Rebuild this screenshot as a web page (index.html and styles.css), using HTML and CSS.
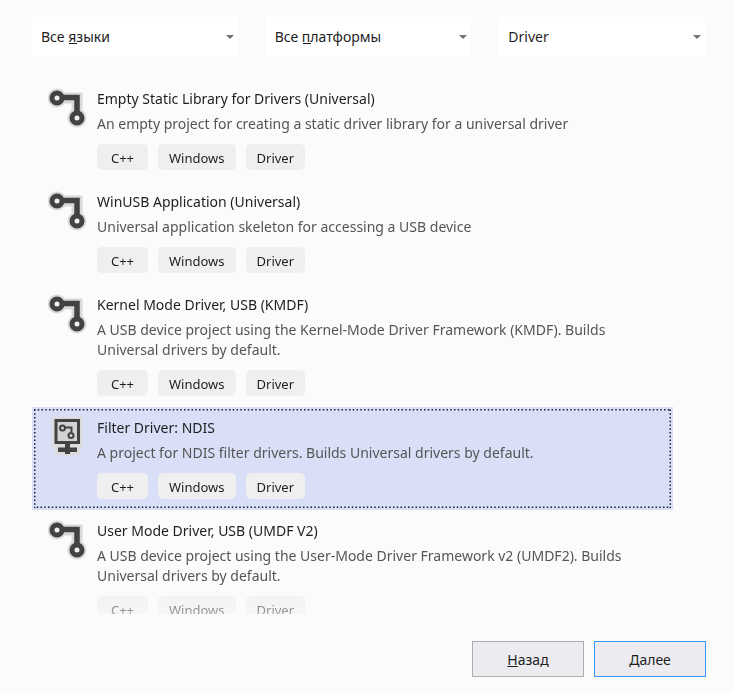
FILE: index.html
```html
<!DOCTYPE html>
<html lang="ru">
<head>
	<meta charset="UTF-8">
	<title>Создание проекта</title>
	<link rel="stylesheet" href="styles.css">
</head>
<body>

	<svg class="sprite" aria-hidden="true">
		<symbol id="icon-driver" viewBox="0 0 40 40">
			<g fill="none" stroke="#d9d9d9" stroke-width="11">
				<path d="M9 10H29V30" />
				<circle cx="9" cy="10" r="4" />
				<circle cx="29" cy="30" r="4" />
			</g>
			<path d="M14 9.5H29V26" fill="none" stroke="#424242" stroke-width="5.5" />
			<g fill="#f0f0f0" stroke="#424242" stroke-width="5">
				<circle cx="9" cy="10" r="5" />
				<circle cx="29" cy="30" r="5" />
			</g>
		</symbol>
		<symbol id="icon-filter" viewBox="0 0 40 40">
			<path d="M3.5 0H34.5V30H32V38H25V39H14V38H7V30H3.5Z" fill="#dcdcdc" />
			<rect x="8" y="3.5" width="22.5" height="22" fill="#d2d2d2" stroke="#424242" stroke-width="3" />
			<path d="M17 26H22V30.5H29V35H22V37H17V35H10V30.5H17Z" fill="#424242" />
			<g fill="none" stroke="#424242" stroke-width="2">
				<path d="M17 10.5H23.5V15" />
				<circle cx="14.5" cy="11" r="2.5" />
				<circle cx="23" cy="18.5" r="2.5" />
			</g>
		</symbol>
	</svg>

	<div class="wrapper">
		<form class="filters" action="" method="get">
			<div class="filter">
				<select class="key-language" name="language" aria-label="Язык" accesskey="я">
					<option>Все языки</option>
				</select>
			</div>
			<div class="filter">
				<select class="key-platform" name="platform" aria-label="Платформа" accesskey="п">
					<option>Все платформы</option>
				</select>
			</div>
			<div class="filter">
				<select name="type" aria-label="Тип проекта">
					<option>Driver</option>
				</select>
			</div>
		</form>

		<ul class="templates">
			<li class="template">
				<svg class="icon"><use href="#icon-driver" /></svg>
				<div class="info">
					<h2>Empty Static Library for Drivers (Universal)</h2>
					<p>An empty project for creating a static driver library for a universal driver</p>
					<div class="tags"><span>C++</span><span>Windows</span><span>Driver</span></div>
				</div>
			</li>
			<li class="template">
				<svg class="icon"><use href="#icon-driver" /></svg>
				<div class="info">
					<h2>WinUSB Application (Universal)</h2>
					<p>Universal application skeleton for accessing a USB device</p>
					<div class="tags"><span>C++</span><span>Windows</span><span>Driver</span></div>
				</div>
			</li>
			<li class="template">
				<svg class="icon"><use href="#icon-driver" /></svg>
				<div class="info">
					<h2>Kernel Mode Driver, USB (KMDF)</h2>
					<p>A USB device project using the Kernel-Mode Driver Framework (KMDF). Builds Universal drivers by default.</p>
					<div class="tags"><span>C++</span><span>Windows</span><span>Driver</span></div>
				</div>
			</li>
			<li class="template selected">
				<svg class="focus" aria-hidden="true"><rect width="100%" height="100%" /></svg>
				<svg class="icon"><use href="#icon-filter" /></svg>
				<div class="info">
					<h2>Filter Driver: NDIS</h2>
					<p>A project for NDIS filter drivers. Builds Universal drivers by default.</p>
					<div class="tags"><span>C++</span><span>Windows</span><span>Driver</span></div>
				</div>
			</li>
			<li class="template">
				<svg class="icon"><use href="#icon-driver" /></svg>
				<div class="info">
					<h2>User Mode Driver, USB (UMDF V2)</h2>
					<p>A USB device project using the User-Mode Driver Framework v2 (UMDF2). Builds Universal drivers by default.</p>
					<div class="tags"><span>C++</span><span>Windows</span><span>Driver</span></div>
				</div>
			</li>
		</ul>

		<div class="actions">
			<button type="button"><u>Н</u>азад</button>
			<button type="button" class="primary"><u>Д</u>алее</button>
		</div>
	</div>

</body>
</html>
```
FILE: styles.css
```css
* {
	box-sizing: border-box;
}
body {
	margin: 0;
	font-family: "Noto Sans", "Open Sans", sans-serif;
	font-size: 14px;
	line-height: 20px;
	color: #1e1e1e;
	background-color: #fbfbfb;
}
.sprite {
	position: absolute;
	width: 0;
	height: 0;
}
.wrapper {
	display: flex;
	flex-direction: column;
	height: 100vh;
	padding: 17px 28px 16px 32px;
}
.filters {
	display: grid;
	grid-template-columns: repeat(3, 1fr);
	gap: 28px;
	margin: 0 1px 22px 0;
}
.filter {
	position: relative;
}
.filter::after {
	content: "";
	position: absolute;
	top: 18px;
	right: 4px;
	border: 4px solid transparent;
	border-top-color: #717171;
	border-bottom: none;
	pointer-events: none;
}
select {
	appearance: none;
	display: block;
	width: 100%;
	height: 39px;
	padding: 0 24px 0 9px;
	border: none;
	border-radius: 0;
	font: inherit;
	color: inherit;
	background-color: #fff;
}
/* access key underlines */
.key-language,
.key-platform {
	background-image: linear-gradient(#1e1e1e, #1e1e1e);
	background-repeat: no-repeat;
	background-position: 37px 26px;
	background-size: 8px 1px;
}
.templates {
	flex: 1;
	min-height: 0;
	margin: 0 33px 27px 0;
	padding: 0;
	list-style: none;
	overflow: hidden;
	-webkit-mask-image: linear-gradient(to top, rgba(0, 0, 0, .4), #000 32px);
	mask-image: linear-gradient(to top, rgba(0, 0, 0, .4), #000 32px);
}
.template {
	position: relative;
	display: flex;
	gap: 9px;
	padding: 10px 16px 11px;
}
.selected {
	background-color: #dadff8;
}
.focus {
	position: absolute;
	top: 2px;
	left: 2px;
	width: calc(100% - 4px);
	height: calc(100% - 4px);
}
.focus rect {
	fill: none;
	stroke: #1e1e2a;
	stroke-width: 3;
	stroke-dasharray: 1.5 2.25;
}
.icon {
	flex: none;
	width: 40px;
	height: 40px;
}
.info {
	flex: 1;
	padding-top: 1px;
}
h2 {
	margin: 0 0 5px;
	font-size: 14px;
	font-weight: 400;
}
p {
	max-width: 550px;
	margin: 0 0 10px;
	color: #555;
}
.tags {
	display: flex;
	gap: 10px;
}
.tags span {
	min-width: 51px;
	height: 26px;
	padding: 0 11px;
	border-radius: 5px;
	font-size: 13px;
	line-height: 28px;
	text-align: center;
	color: #1e1e1e;
	background-color: #efefef;
}
.actions {
	display: flex;
	justify-content: flex-end;
	gap: 10px;
}
button {
	width: 112px;
	height: 36px;
	padding: 2px 0 0;
	border: 1px solid #acacac;
	font: inherit;
	color: inherit;
	background-color: #ececf0;
}
.primary {
	border-color: #3399ff;
}
```
